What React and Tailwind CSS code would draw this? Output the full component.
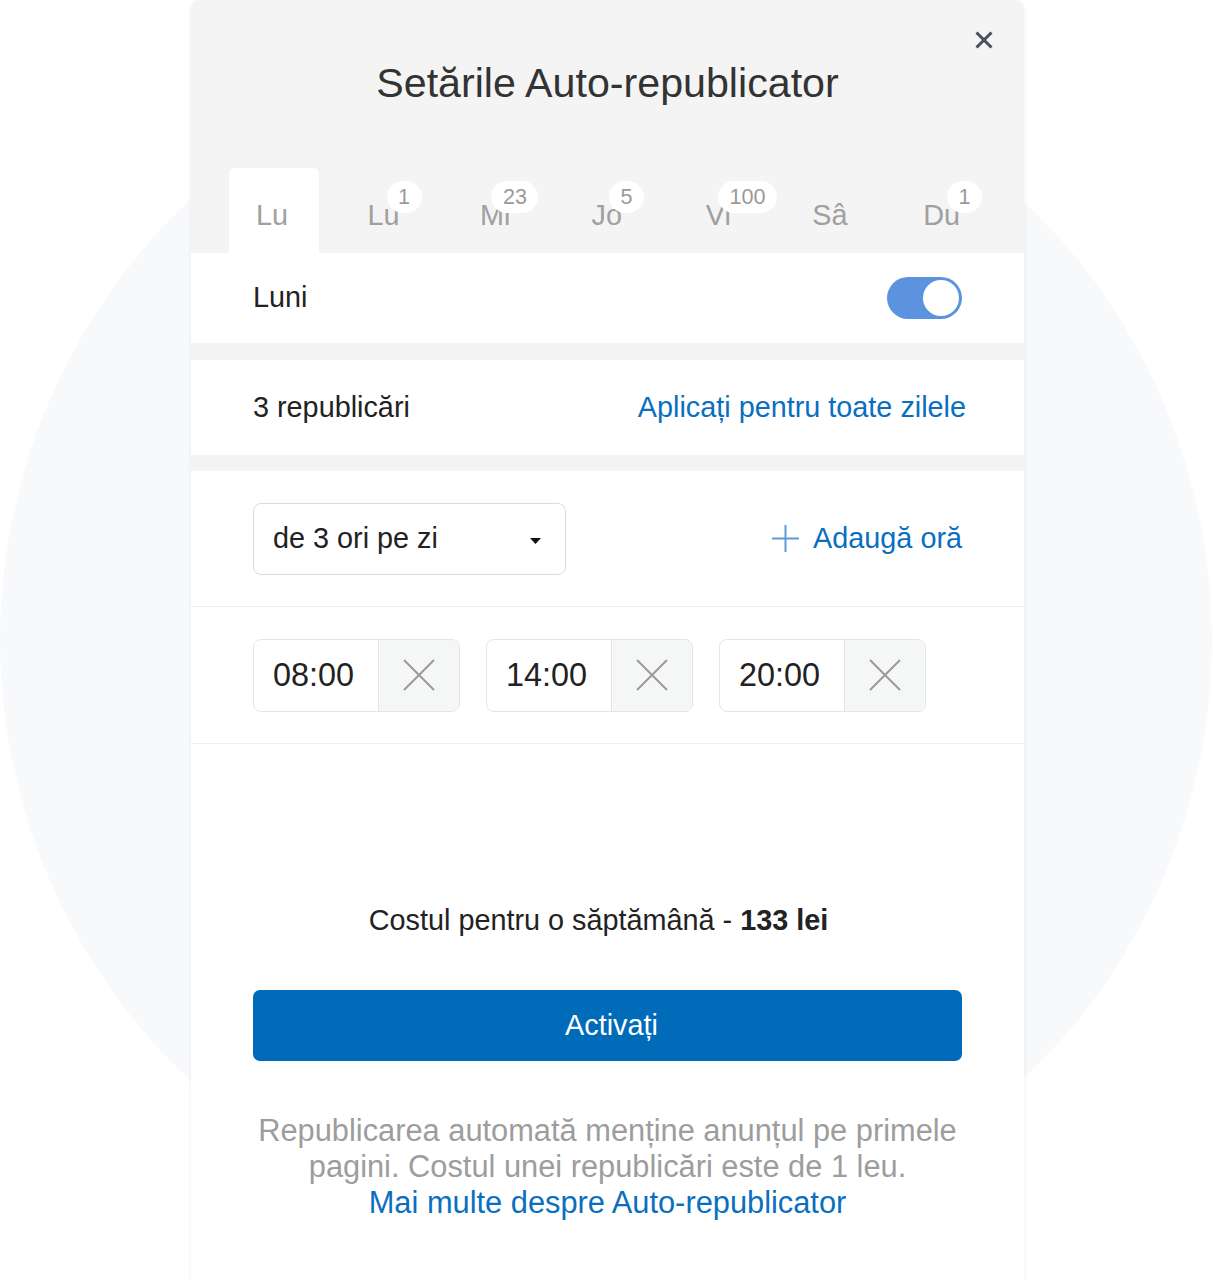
import React from "react";

const tabs = [
  { label: "Lu", active: true },
  { label: "Lu", badge: "1" },
  { label: "Mi", badge: "23", shift: true },
  { label: "Jo", badge: "5" },
  { label: "Vi", badge: "100" },
  { label: "Sâ" },
  { label: "Du", badge: "1" },
];

const times = ["08:00", "14:00", "20:00"];

function ThinX({ className }) {
  return (
    <svg viewBox="0 0 32 32" className={className} fill="none" stroke="currentColor" strokeWidth="2">
      <path d="M1 1 L31 31 M31 1 L1 31" />
    </svg>
  );
}

export default function App() {
  return (
    <div
      className="relative w-full min-h-[1280px] bg-white overflow-hidden flex justify-center pl-[2px]"
      style={{ fontFamily: '"Liberation Sans", Arial, sans-serif' }}
    >
      <div className="absolute left-0 top-[34px] w-[1212px] h-[1212px] rounded-full bg-[#f8f9fb]" />

      <div className="relative w-[833px] min-h-[1280px] bg-white rounded-t-[10px] shadow-[0_0_4px_rgba(0,0,0,0.07)]">
        {/* Header */}
        <div className="relative bg-[#f4f4f4] rounded-t-[10px] h-[253px] flex flex-col">
          <button className="absolute right-[31px] top-[31px] w-[18px] h-[18px] text-[#4b4f5c]">
            <svg viewBox="0 0 18 18" className="w-[18px] h-[18px]" fill="none" stroke="currentColor" strokeWidth="3">
              <path d="M1.5 1.5 L16.5 16.5 M16.5 1.5 L1.5 16.5" />
            </svg>
          </button>
          <h1 className="pt-[59px] text-center text-[41.2px] leading-[48px] text-[#333]">
            Setările Auto-republicator
          </h1>
          <div className="mt-auto flex gap-[21.6px] pl-[38px] h-[85px]">
            {tabs.map((t, i) => (
              <div
                key={i}
                className={
                  t.active
                    ? "w-[90px] h-[85px] bg-white rounded-t-[6px] flex justify-center"
                    : "w-[90px] h-[85px] flex justify-center"
                }
              >
                <span className="relative mt-[31px] ml-[-4px] h-[32px] text-[28.8px] leading-[32px] text-[#a0a0a0]">
                  {t.label}
                  {t.badge && (
                    <span
                      className={
                        (t.shift ? "left-[calc(100%-19px)] " : "left-[calc(100%-13px)] ") +
                        "absolute top-[-18px] h-[32px] min-w-[35px] px-[11.5px] rounded-full bg-white text-[21.6px] leading-[32px] text-[#9a9a9a] text-center"
                      }
                    >
                      {t.badge}
                    </span>
                  )}
                </span>
              </div>
            ))}
          </div>
        </div>

        {/* Luni row */}
        <div className="h-[90px] px-[62px] flex items-center justify-between">
          <span className="text-[28.8px] text-[#222]">Luni</span>
          <div className="w-[75px] h-[42px] rounded-full bg-[#5b93df] flex items-center justify-end pr-[3px]">
            <div className="w-[36px] h-[36px] rounded-full bg-white" />
          </div>
        </div>
        <div className="h-[17px] bg-[#f4f4f4]" />

        {/* republicari row */}
        <div className="h-[95px] px-[62px] flex items-center justify-between">
          <span className="text-[28.8px] text-[#222]">3 republicări</span>
          <a className="text-[28.8px] text-[#0a6fbf] ml-auto mr-[-4px]">Aplicați pentru toate zilele</a>
        </div>
        <div className="h-[16px] bg-[#f4f4f4]" />

        {/* dropdown row */}
        <div className="h-[136px] px-[62px] flex items-center justify-between border-b border-[#eeeeee]">
          <div className="w-[313px] h-[72px] border-[1.5px] border-[#dcdcdc] rounded-[8px] flex items-center justify-between pl-[19px] pr-[24px]">
            <span className="text-[28.8px] text-[#222]">de 3 ori pe zi</span>
            <svg viewBox="0 0 11 6" className="w-[11px] h-[6px] mt-[4px]">
              <path d="M0 0 H11 L5.5 6 Z" fill="#111" />
            </svg>
          </div>
          <div className="flex items-center gap-[14px] text-[#0a6fbf]">
            <svg viewBox="0 0 27 27" className="w-[27px] h-[27px] text-[#5a9bd8]" fill="none" stroke="currentColor" strokeWidth="2">
              <path d="M13.5 0 V27 M0 13.5 H27" />
            </svg>
            <span className="text-[28.8px]">Adaugă oră</span>
          </div>
        </div>

        {/* times row */}
        <div className="h-[137px] px-[62px] flex items-center gap-[26px] border-b border-[#eeeeee]">
          {times.map((t) => (
            <div key={t} className="w-[207px] h-[73px] border-[1.5px] border-[#e5e5e5] rounded-[8px] flex overflow-hidden">
              <div className="w-[124px] flex items-center pl-[19px] text-[32.4px] text-[#222]">{t}</div>
              <div className="flex-1 bg-[#f5f6f6] border-l-[1.5px] border-[#e5e5e5] flex items-center justify-center text-[#9a9a9a]">
                <ThinX className="w-[32px] h-[32px]" />
              </div>
            </div>
          ))}
        </div>

        {/* cost */}
        <div className="pt-[160px] text-center text-[28.8px] leading-[32px] text-[#222] pr-[18px]">
          Costul pentru o săptămână - <b>133 lei</b>
        </div>

        <div className="px-[62px] mt-[54px]">
          <button className="w-full h-[71px] rounded-[7px] bg-[#006bb9] text-white text-[28.8px] pl-[8px]">
            Activați
          </button>
        </div>

        <p className="mt-[52px] px-[40px] text-center text-[30.8px] leading-[36px] text-[#9d9d9d]">
          Republicarea automată menține anunțul pe primele
          <br />
          pagini. Costul unei republicări este de 1 leu.
          <br />
          <a className="text-[#0a6fbf]">Mai multe despre Auto-republicator</a>
        </p>
      </div>
    </div>
  );
}
